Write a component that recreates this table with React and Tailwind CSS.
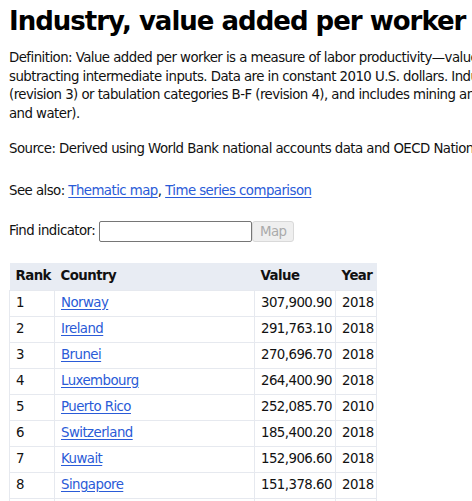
import React from 'react';

const rows = [
    [1, 'Norway', '307,900.90', 2018],
    [2, 'Ireland', '291,763.10', 2018],
    [3, 'Brunei', '270,696.70', 2018],
    [4, 'Luxembourg', '264,400.90', 2018],
    [5, 'Puerto Rico', '252,085.70', 2010],
    [6, 'Switzerland', '185,400.20', 2018],
    [7, 'Kuwait', '152,906.60', 2018],
    [8, 'Singapore', '151,378.60', 2018],
    [9, 'Qatar', '148,530.20', 2018],
];

const link = 'text-[#2a5bd7] underline underline-offset-2';

const App = () => {
    return (
        <div className="w-screen h-screen overflow-hidden bg-white text-[#111] font-['DejaVu_Sans',Verdana,sans-serif] text-[13.33px] leading-[18.67px] tracking-[-0.55px]">
            <div className="w-[1000px] pl-[9px] pt-[6px]">
                <h1 className="text-[26px] font-bold leading-[31px] text-black tracking-[-1px]">Industry, value added per worker</h1>

                {/* Definition block */}
                <p className="mt-[12px] whitespace-nowrap">
                    Definition: Value added per worker is a measure of labor productivity—value added is the net output of a sector after adding up all outputs and<br />
                    subtracting intermediate inputs. Data are in constant 2010 U.S. dollars. Industry corresponds to ISIC divisions 10-45<br />
                    (revision 3) or tabulation categories B-F (revision 4), and includes mining and quarrying (including oil and gas), construction, electricity, gas,<br />
                    and water).
                </p>

                <p className="mt-[16px] whitespace-nowrap">
                    Source: Derived using World Bank national accounts data and OECD National Accounts data files, and employment data from the ILO.
                </p>

                <p className="mt-[24px]">
                    See also: <a href="#" className={link}>Thematic map</a>, <a href="#" className={link}>Time series comparison</a>
                </p>

                <div className="mt-[20px] flex items-center h-[21px]">
                    <span>Find indicator:</span>
                    <input className="ml-[4px] w-[153px] h-[21px] border border-[#767676] rounded-[2px] px-1 text-[13px]" />
                    <button disabled className="w-[42px] h-[21px] bg-[#efefef] border border-[#d9d9d9] rounded-[3px] text-[#aaa] text-[13.33px] leading-none">Map</button>
                </div>

                {/* Ranking table */}
                <table className="mt-[21px] border-collapse w-[367px] table-fixed">
                    <colgroup>
                        <col className="w-[45px]" />
                        <col className="w-[200px]" />
                        <col className="w-[81px]" />
                        <col className="w-[41px]" />
                    </colgroup>
                    <thead>
                        <tr className="bg-[#e8ecf3] h-[27px]">
                            <th className="text-left font-bold pl-[6px] pr-0">Rank</th>
                            <th className="text-left font-bold pl-[6px]">Country</th>
                            <th className="text-left font-bold pl-[6px]">Value</th>
                            <th className="text-left font-bold pl-[6px]">Year</th>
                        </tr>
                    </thead>
                    <tbody>
                        {rows.map(([rank, country, value, year]) => (
                            <tr key={rank} className="h-[26px]">
                                <td className="border border-[#e6e9ef] pl-[6px]">{rank}</td>
                                <td className="border border-[#e6e9ef] pl-[6px]"><a href="#" className={link}>{country}</a></td>
                                <td className="border border-[#e6e9ef] pl-[6px] whitespace-nowrap">{value}</td>
                                <td className="border border-[#e6e9ef] pl-[6px]">{year}</td>
                            </tr>
                        ))}
                    </tbody>
                </table>
            </div>
        </div>
    );
};

export default App;
